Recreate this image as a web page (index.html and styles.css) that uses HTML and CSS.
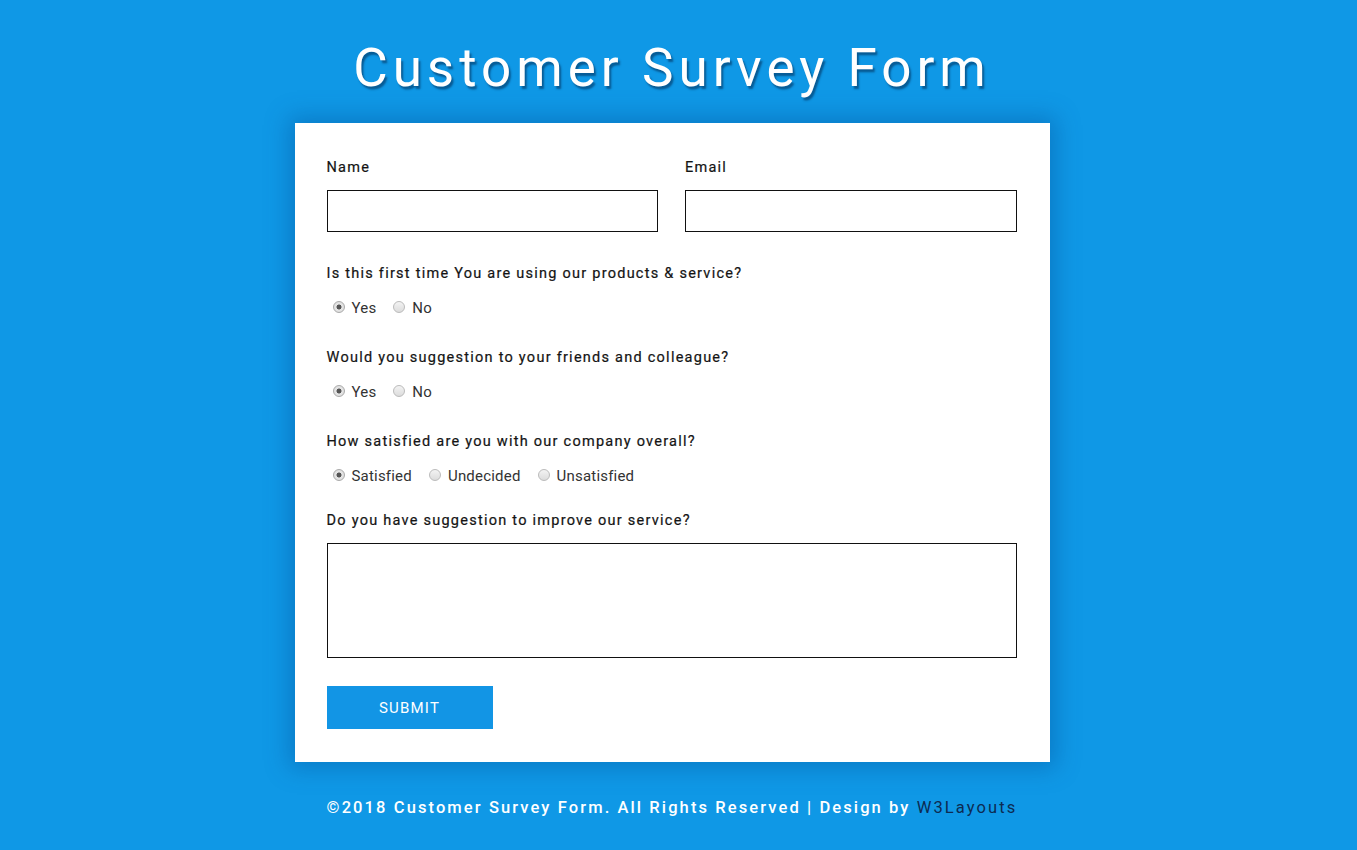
FILE: index.html
```html
<!DOCTYPE html>
<html lang="en">
<head>
<meta charset="utf-8">
<title>Customer Survey Form</title>
<link rel="stylesheet" href="styles.css">
</head>
<body>
<h1 class="title">Customer Survey Form</h1>
<div class="card">
  <form class="form">
    <div class="row">
      <div class="field">
        <label class="label">Name</label>
        <input class="input" type="text">
      </div>
      <div class="field">
        <label class="label">Email</label>
        <input class="input" type="email">
      </div>
    </div>
    <div class="group">
      <p class="label">Is this first time You are using our products &amp; service?</p>
      <div class="radios">
        <label class="opt"><input class="radio" type="radio" name="q1" checked><span>Yes</span></label>
        <label class="opt"><input class="radio" type="radio" name="q1"><span>No</span></label>
      </div>
    </div>
    <div class="group">
      <p class="label">Would you suggestion to your friends and colleague?</p>
      <div class="radios">
        <label class="opt"><input class="radio" type="radio" name="q2" checked><span>Yes</span></label>
        <label class="opt"><input class="radio" type="radio" name="q2"><span>No</span></label>
      </div>
    </div>
    <div class="group">
      <p class="label">How satisfied are you with our company overall?</p>
      <div class="radios">
        <label class="opt"><input class="radio" type="radio" name="q3" checked><span>Satisfied</span></label>
        <label class="opt"><input class="radio" type="radio" name="q3"><span>Undecided</span></label>
        <label class="opt"><input class="radio" type="radio" name="q3"><span>Unsatisfied</span></label>
      </div>
    </div>
    <div class="group last">
      <p class="label">Do you have suggestion to improve our service?</p>
      <textarea class="textarea"></textarea>
    </div>
    <button class="submit" type="button">SUBMIT</button>
  </form>
</div>
<p class="footer">©2018 Customer Survey Form. All Rights Reserved | Design by <a class="footer-link" href="#">W3Layouts</a></p>
</body>
</html>
```

FILE: styles.css
```css
* { box-sizing: border-box; }
html, body { margin: 0; padding: 0; }
body {
  background: #0f98e6;
  font-family: Roboto, "Liberation Sans", Arial, sans-serif;
  display: flex;
  flex-direction: column;
  align-items: center;
  min-height: 850px;
  padding-right: 13px;
}
.title {
  margin: 36px 0 0;
  height: 87px;
  font-size: 53px;
  font-weight: 400;
  letter-spacing: 5px;
  color: #fff;
  line-height: 64px;
  text-shadow: 2px 3px 2px rgba(0, 40, 80, 0.55);
}
.card {
  width: 755px;
  background: #fff;
  padding: 36px 33px 33px 32px;
  box-shadow: 0 0 22px 6px rgba(0, 70, 140, 0.35);
}
.form { display: flex; flex-direction: column; }
.row { display: flex; gap: 27px; }
.field { flex: 1; display: flex; flex-direction: column; }
.label {
  margin: 0;
  font-size: 14.5px;
  font-weight: 400;
  letter-spacing: 1.25px;
  color: #141414;
  line-height: 18px;
  -webkit-text-stroke: 0.2px #141414;
}
.field .label { margin-bottom: 13px; }
.input {
  height: 42px;
  border: 1px solid #111;
  background: #fff;
  margin: 0;
  padding: 0 10px;
}
.group { margin-top: 32px; }
.row + .group { margin-top: 33px; }
.group + .group { margin-top: 32px; }
.radios { display: flex; gap: 17px; margin-top: 16px; padding-left: 6px; height: 18px; align-items: center; }
.opt {
  display: flex;
  align-items: center;
  gap: 7px;
  font-size: 15px;
  color: #333;
  letter-spacing: 0.2px;
}
.radio {
  appearance: none;
  -webkit-appearance: none;
  width: 12px;
  height: 12px;
  margin: 0;
  border-radius: 50%;
  border: 1px solid #bbb;
  background: linear-gradient(#f3f3f3, #dcdcdc);
  position: relative;
  top: -1px;
}
.radio:checked {
  background: radial-gradient(circle, #555 0, #555 2.2px, #e6e6e6 2.8px, #d8d8d8 100%);
  border-color: #aaa;
}
.group.last { margin-top: 27px; }
.group.last .label { margin-bottom: 13px; }
.textarea {
  display: block;
  width: 100%;
  height: 115px;
  border: 1px solid #111;
  resize: none;
  margin: 0;
}
.submit {
  margin-top: 28px;
  width: 166px;
  height: 43px;
  border: none;
  background: #1295e5;
  color: #fff;
  font-family: Roboto, "Liberation Sans", Arial, sans-serif;
  font-size: 15px;
  font-weight: 400;
  letter-spacing: 1.2px;
  padding: 0;
}
.footer {
  margin: 36px 0 0;
  font-size: 16.5px;
  font-weight: 500;
  letter-spacing: 2.1px;
  color: #fff;
}
.footer-link { color: #0d2b52; text-decoration: none; font-weight: 400; }
```
